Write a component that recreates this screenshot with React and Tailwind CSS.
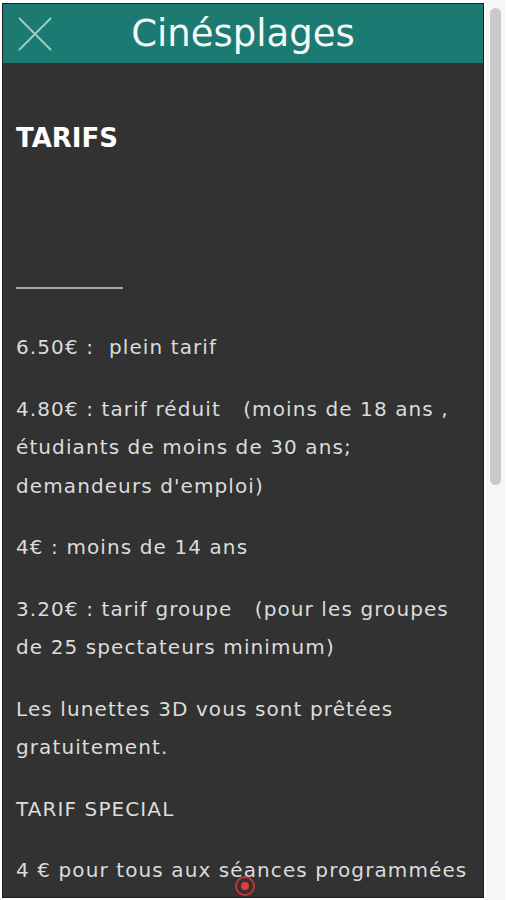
import React from 'react';

const FONT = { fontFamily: '"DejaVu Sans", "Noto Sans", sans-serif' };

const rates = [
  ['6.50€ :  plein tarif'],
  ['4.80€ : tarif réduit   (moins de 18 ans ,', 'étudiants de moins de 30 ans;', "demandeurs d'emploi)"],
  ['4€ : moins de 14 ans'],
  ['3.20€ : tarif groupe   (pour les groupes', 'de 25 spectateurs minimum)'],
  ['Les lunettes 3D vous sont prêtées', 'gratuitement.'],
  ['TARIF SPECIAL'],
  ['4 € pour tous aux séances programmées', 'à l’occasion des événements du cinéma'],
];

const App = () => {
  return (
    <div className="flex h-[900px] overflow-hidden bg-white" style={FONT}>
      <div className="relative mt-[3px] ml-[2px] h-[895px] w-[482px] overflow-hidden border border-[#1e1e1e] bg-[#323232]">
        <header className="relative flex h-[59px] items-center justify-center bg-[#1b7a72]">
          <svg
            className="absolute left-[14px] top-[12px]"
            width="36"
            height="36"
            viewBox="0 0 36 36"
            fill="none"
            stroke="#9fcbc6"
            strokeWidth="2"
          >
            <path d="M2 2 L34 34 M34 2 L2 34" />
          </svg>
          <h1 className="text-[37px] leading-none text-[#f4f8f7]">Cinésplages</h1>
        </header>

        <div className="px-[13px] pt-[60px] text-[20px] leading-[38.5px] tracking-[1.1px] text-[#dcdcdc]">
          <h2 className="text-[26px] font-bold leading-[30px] tracking-normal text-white">TARIFS</h2>
          <div className="mt-[134px] mb-[39px] h-[2px] w-[107px] bg-[#a9a9a9]" />
          <div className="flex flex-col gap-[23px]">
            {rates.map((lines, i) => (
              <p key={i} className="whitespace-pre">
                {lines.map((l, j) => (
                  <span key={j} className="block">{l}</span>
                ))}
              </p>
            ))}
          </div>
        </div>

        <div className="absolute left-[232px] top-[872px] flex h-[20px] w-[20px] items-center justify-center rounded-full border-2 border-[#e23a3a]/80">
          <div className="h-[8px] w-[8px] rounded-full bg-[#e23a3a]" />
        </div>
      </div>

      <div className="ml-[2px] h-[900px] w-[19px] bg-[#f6f6f6] pt-[8px] pl-[4px]">
        <div className="h-[477px] w-[11px] rounded-full bg-[#c9c9c9]" />
      </div>
    </div>
  );
};

export default App;
